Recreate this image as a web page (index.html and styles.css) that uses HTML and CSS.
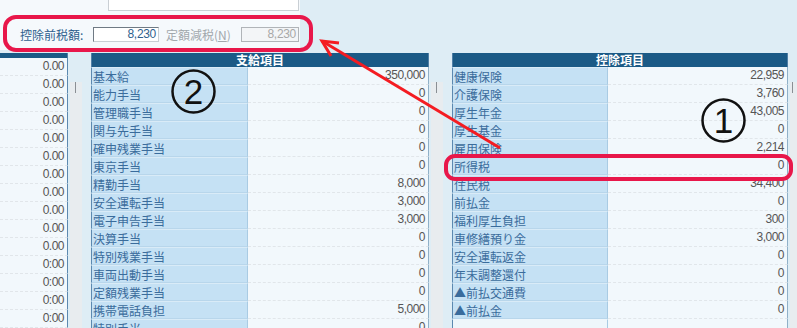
FILE: index.html
```html
<!DOCTYPE html>
<html lang="ja">
<head>
    <meta charset="UTF-8">
    <title>給与明細入力</title>
    <link rel="stylesheet" href="styles.css">
</head>
<body>
    <div class="top">
        <div class="top-panel">
            <div class="top-box"></div>
            <div class="tax-row">
                <span class="tax-label">控除前税額:</span>
                <span class="tax-input">8,230</span>
                <span class="tax-sub">定額減税(<u>N</u>)</span>
                <span class="tax-input disabled">8,230</span>
            </div>
        </div>
    </div>

    <div class="grid">
        <!-- left (partly hidden) table -->
        <div class="tbl tbl-left">
            <div class="thead"></div>
            <div class="row"><span class="val">0.00</span></div>
            <div class="row"><span class="val">0.00</span></div>
            <div class="row"><span class="val">0.00</span></div>
            <div class="row"><span class="val">0.00</span></div>
            <div class="row"><span class="val">0.00</span></div>
            <div class="row"><span class="val">0.00</span></div>
            <div class="row"><span class="val">0.00</span></div>
            <div class="row"><span class="val">0.00</span></div>
            <div class="row"><span class="val">0.00</span></div>
            <div class="row"><span class="val">0.00</span></div>
            <div class="row"><span class="val">0.00</span></div>
            <div class="row"><span class="val">0:00</span></div>
            <div class="row"><span class="val">0:00</span></div>
            <div class="row"><span class="val">0:00</span></div>
            <div class="row"><span class="val">0:00</span></div>
        </div>
        <div class="strip"><div class="track"><div class="thumb"></div></div></div>

        <!-- 支給項目 -->
        <div class="tbl tbl-mid">
            <div class="thead">支給項目</div>
            <div class="row"><span class="lbl">基本給</span><span class="val">350,000</span></div>
            <div class="row"><span class="lbl">能力手当</span><span class="val">0</span></div>
            <div class="row"><span class="lbl">管理職手当</span><span class="val">0</span></div>
            <div class="row"><span class="lbl">関与先手当</span><span class="val">0</span></div>
            <div class="row"><span class="lbl">確申残業手当</span><span class="val">0</span></div>
            <div class="row"><span class="lbl">東京手当</span><span class="val">0</span></div>
            <div class="row"><span class="lbl">精勤手当</span><span class="val">8,000</span></div>
            <div class="row"><span class="lbl">安全運転手当</span><span class="val">3,000</span></div>
            <div class="row"><span class="lbl">電子申告手当</span><span class="val">3,000</span></div>
            <div class="row"><span class="lbl">決算手当</span><span class="val">0</span></div>
            <div class="row"><span class="lbl">特別残業手当</span><span class="val">0</span></div>
            <div class="row"><span class="lbl">車両出動手当</span><span class="val">0</span></div>
            <div class="row"><span class="lbl">定額残業手当</span><span class="val">0</span></div>
            <div class="row"><span class="lbl">携帯電話負担</span><span class="val">5,000</span></div>
            <div class="row"><span class="lbl">特別手当</span><span class="val">0</span></div>
        </div>
        <div class="strip"><div class="track"><div class="thumb"></div></div></div>

        <!-- 控除項目 -->
        <div class="tbl tbl-right">
            <div class="thead">控除項目</div>
            <div class="row"><span class="lbl">健康保険</span><span class="val">22,959</span></div>
            <div class="row"><span class="lbl">介護保険</span><span class="val">3,760</span></div>
            <div class="row"><span class="lbl">厚生年金</span><span class="val">43,005</span></div>
            <div class="row"><span class="lbl">厚生基金</span><span class="val">0</span></div>
            <div class="row"><span class="lbl">雇用保険</span><span class="val">2,214</span></div>
            <div class="row"><span class="lbl">所得税</span><span class="val">0</span></div>
            <div class="row"><span class="lbl">住民税</span><span class="val">34,400</span></div>
            <div class="row"><span class="lbl">前払金</span><span class="val">0</span></div>
            <div class="row"><span class="lbl">福利厚生負担</span><span class="val">300</span></div>
            <div class="row"><span class="lbl">車修繕預り金</span><span class="val">3,000</span></div>
            <div class="row"><span class="lbl">安全運転返金</span><span class="val">0</span></div>
            <div class="row"><span class="lbl">年末調整還付</span><span class="val">0</span></div>
            <div class="row"><span class="lbl">▲前払交通費</span><span class="val">0</span></div>
            <div class="row"><span class="lbl">▲前払金</span><span class="val">0</span></div>
            <div class="row empty"><span class="lbl"></span><span class="val"></span></div>
        </div>
        <div class="strip strip-end"><div class="track"><div class="thumb"></div></div></div>
    </div>

    <!-- annotations drawn over the screen -->
    <svg class="marks" width="797" height="328" viewBox="0 0 797 328">
        <rect x="5" y="17" width="306" height="33" rx="11" fill="none" stroke="#e8174a" stroke-width="4"/>
        <rect x="446" y="156" width="345" height="23" rx="9" fill="none" stroke="#e8174a" stroke-width="4"/>
        <line x1="500" y1="148" x2="322" y2="41" stroke="#f41c22" stroke-width="3"/>
        <polyline points="339,43 322,41 331,56" fill="none" stroke="#f41c22" stroke-width="3"/>
        <circle cx="193.5" cy="91.5" r="21" fill="none" stroke="#111" stroke-width="2.5"/>
        <text x="193.5" y="104" class="num">2</text>
        <circle cx="723.5" cy="120.5" r="21" fill="none" stroke="#111" stroke-width="2.5"/>
        <text x="723.5" y="133" class="num">1</text>
    </svg>
</body>
</html>
```

FILE: styles.css
```css
body {
    margin: 0;
    width: 797px;
    height: 328px;
    overflow: hidden;
    position: relative;
    background-color: #deedf5;
    font-family: "Noto Sans CJK JP", "Liberation Sans", sans-serif;
    font-size: 12px;
}

/* top panel */
.top {
    height: 53px;
}
.top-panel {
    width: 300px;
    height: 50px;
    background-color: #f5f9fc;
}
.top-box {
    margin-left: 108px;
    width: 189px;
    height: 10px;
    background-color: #fff;
    border: 1px solid #c9cfd4;
    border-top: none;
}
.tax-row {
    display: flex;
    align-items: center;
    height: 15px;
    margin-top: 16px;
    padding-left: 20px;
}
.tax-label {
    color: #2f5f8e;
    width: 73px;
}
.tax-input {
    box-sizing: border-box;
    width: 66px;
    height: 15px;
    line-height: 13px;
    padding-right: 2px;
    text-align: right;
    color: #2f5f8e;
    font-family: "Liberation Sans", sans-serif;
    letter-spacing: -0.3px;
    background-color: #fff;
    border: 1px solid #6f7a84;
    border-right-color: #c9cfd4;
    border-bottom-color: #c9cfd4;
}
.tax-sub {
    color: #a2a8ad;
    margin-left: 7px;
    width: 75px;
}
.tax-input.disabled {
    width: 58px;
    color: #a8a8a8;
    background-color: #f3f5f7;
    border: 1px solid #b0b4b8;
}

/* tables */
.grid {
    display: flex;
    height: 275px;
}
.tbl {
    display: flex;
    flex-direction: column;
}
.tbl-left {
    width: 68px;
}
.tbl-mid {
    width: 338px;
}
.tbl-right {
    width: 336px;
}
.thead {
    height: 14px;
    line-height: 14px;
    background-color: #1b5a86;
    color: #fff;
    font-weight: bold;
    text-align: center;
    border-left: 1px solid #4f7fa6;
    border-right: 1px solid #4f7fa6;
}
.tbl-left .thead {
    border-left: none;
}
.row {
    display: flex;
    height: 18px;
    line-height: 17px;
    flex: none;
}
.lbl {
    box-sizing: border-box;
    width: 157px;
    padding-left: 1px;
    color: #3a6c9c;
    background-color: #c5e1f4;
    border-left: 1px solid #5c89b0;
    border-right: 1px solid #a9cbe3;
    border-top: 1px solid #d9ebf7;
    border-bottom: 1px solid #b8d6eb;
    white-space: nowrap;
}
.val {
    box-sizing: border-box;
    flex: 1;
    padding-right: 3px;
    text-align: right;
    color: #555;
    font-family: "Liberation Sans", sans-serif;
    letter-spacing: -0.5px;
    background-color: #f2f8fc;
    border-bottom: 1px dashed #e1e6ea;
    border-right: 1px solid #8fb0c8;
}
.tbl-left .val {
    border-right-color: #5c89b0;
}
.tbl-right .lbl {
    width: 156px;
}
.row.empty .lbl {
    background-color: #eef6fb;
    border-top-color: #eef6fb;
    border-bottom-color: #eef6fb;
}

/* scroll strips between the tables */
.strip {
    width: 23px;
    padding-top: 14px;
}
.track {
    margin-left: 2px;
    width: 12px;
    height: 100%;
    background-color: #e8ecef;
}
.thumb {
    margin: 15px 0 0 5px;
    width: 1px;
    height: 11px;
    background-color: #8a8f94;
}
.strip-end {
    width: 9px;
}
.strip-end .track {
    width: 7px;
}
.strip-end .thumb {
    margin-left: 2px;
}

/* annotation layer */
.marks {
    position: absolute;
    top: 0;
    left: 0;
    pointer-events: none;
}
.num {
    font-family: "Liberation Sans", sans-serif;
    font-size: 35px;
    fill: #111;
    text-anchor: middle;
}
```
